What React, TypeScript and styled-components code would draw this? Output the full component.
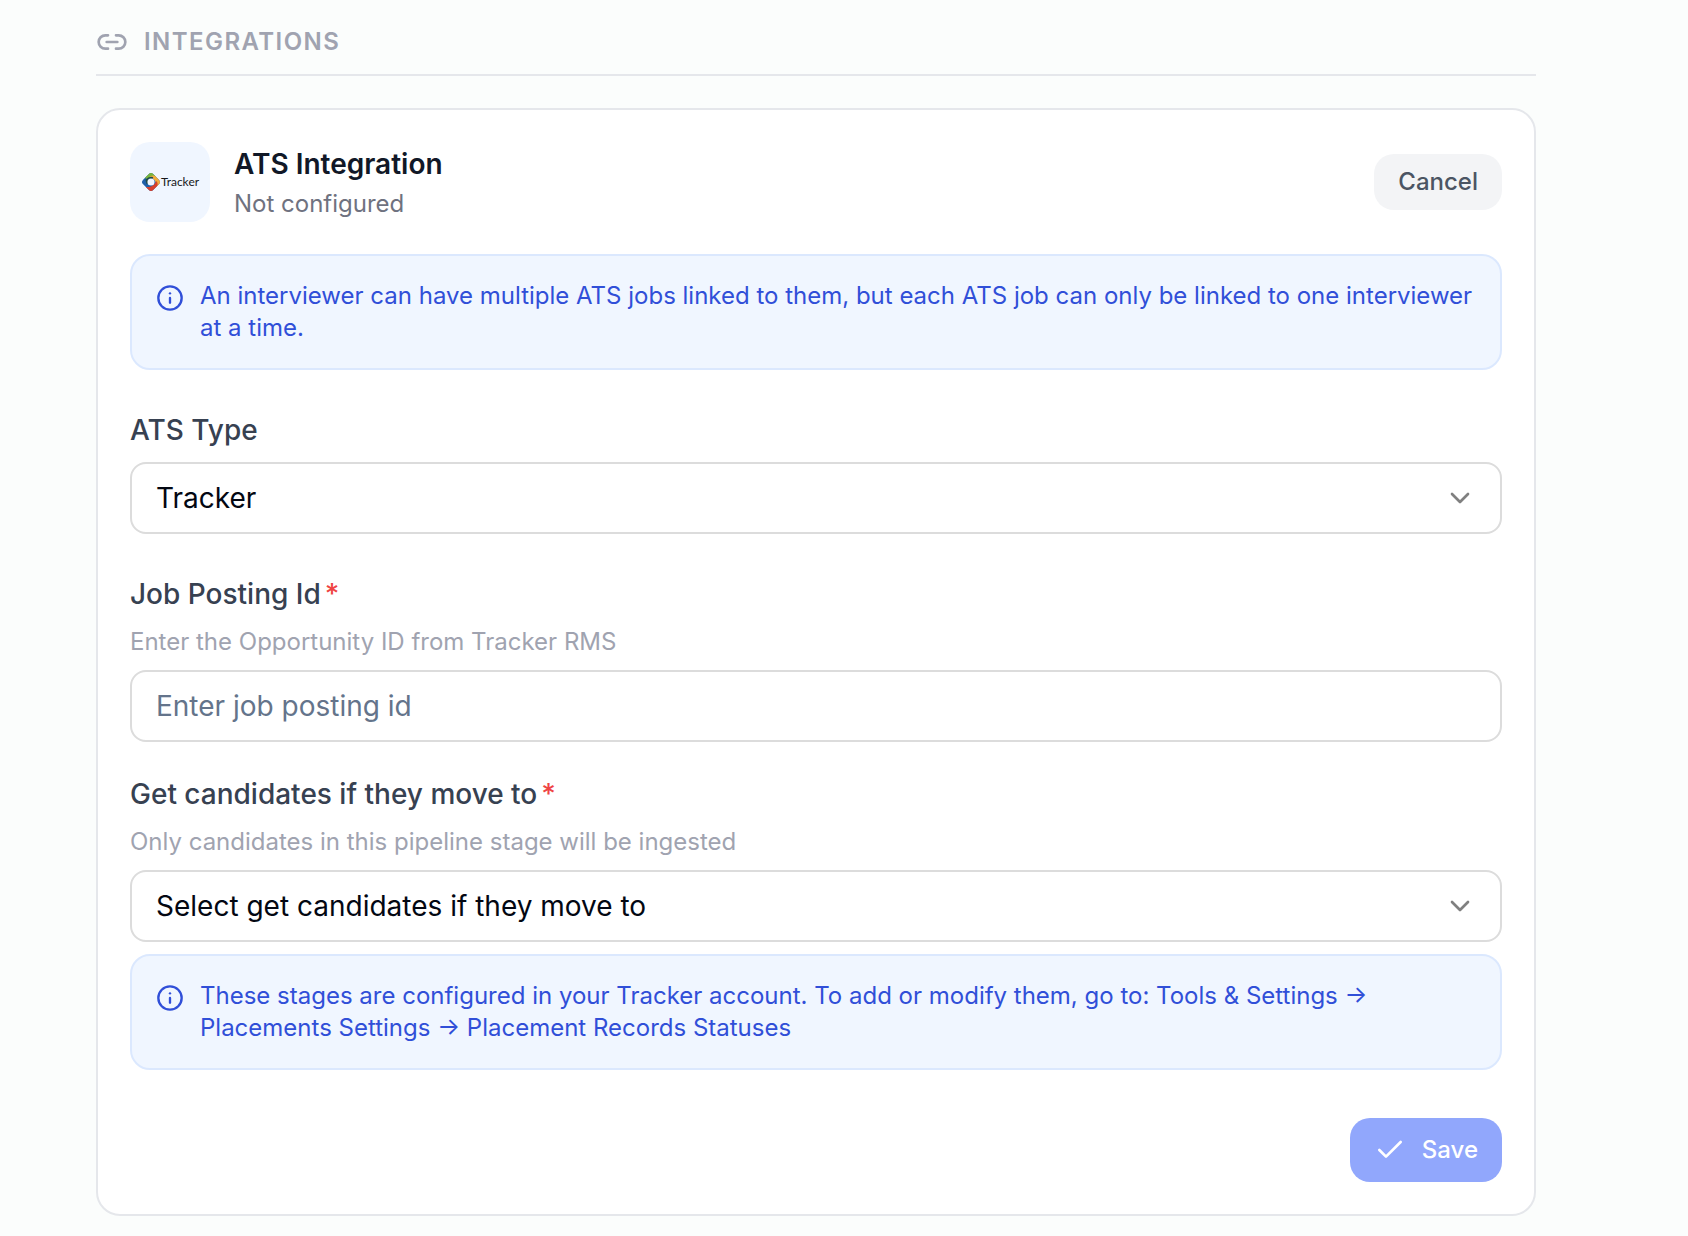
import React, { useState } from "react";
import styled, { createGlobalStyle } from "styled-components";
import { Check, ChevronDown, Info, Link2 } from "lucide-react";

const GlobalStyle = createGlobalStyle`
  *, *::before, *::after { box-sizing: border-box; }
  body {
    margin: 0;
    background: #fbfdfc;
    color: #030712;
    font-family: Inter, "Liberation Sans", sans-serif;
    -webkit-font-smoothing: antialiased;
  }
  button, input, select { font: inherit; letter-spacing: inherit; }
  h1, h2, p { margin: 0; }
`;

const Page = styled.main`
  padding: 26px 152px 20px 96px;
`;

const SectionHeader = styled.header`
  display: flex;
  align-items: center;
  gap: 16px;
  padding-bottom: 16px;
  margin-bottom: 32px;
  border-bottom: 2px solid #e5e7eb;
  color: #a0a3b0;
`;

const SectionTitle = styled.h1`
  font-size: 24px;
  line-height: 32px;
  font-weight: 600;
  letter-spacing: 0.06em;
  text-transform: uppercase;
`;

const Card = styled.section`
  padding: 32px;
  background: #fff;
  border: 2px solid #e5e7eb;
  border-radius: 24px;
`;

const CardHeader = styled.div`
  display: flex;
  align-items: center;
  gap: 24px;
  margin-bottom: 32px;
`;

const LogoTile = styled.div`
  display: flex;
  align-items: center;
  justify-content: center;
  width: 80px;
  height: 80px;
  border-radius: 20px;
  background: #f0f6ff;
`;

const LogoText = styled.span`
  font-family: Lato, sans-serif;
  font-size: 12px;
  line-height: 16px;
  color: #18181b;
`;

const Heading = styled.div`
  display: flex;
  flex: 1;
  flex-direction: column;
  gap: 4px;
`;

const CardTitle = styled.h2`
  font-size: 28px;
  line-height: 40px;
  font-weight: 600;
  color: #111827;
`;

const Status = styled.p`
  font-size: 24px;
  line-height: 32px;
  color: #6f7280;
`;

const Button = styled.button<{ $primary?: boolean }>`
  display: inline-flex;
  align-items: center;
  gap: 16px;
  padding: ${(p) => (p.$primary ? "16px 24px" : "12px 24px")};
  border: 0;
  border-radius: 20px;
  background: ${(p) => (p.$primary ? "#91a7fc" : "#f3f4f6")};
  color: ${(p) => (p.$primary ? "#fff" : "#4b5563")};
  font-size: 24px;
  line-height: 32px;
  font-weight: 500;
  cursor: pointer;
`;

const Notice = styled.div`
  display: flex;
  gap: 16px;
  padding: 24px;
  border: 2px solid #dbe8fe;
  border-radius: 20px;
  background: #f0f6ff;
  color: #304fd8;
  font-size: 24px;
  line-height: 32px;

  svg { flex: none; margin-top: 4px; }
`;

const Form = styled.form`
  display: flex;
  flex-direction: column;
  gap: 40px;
`;

const FieldGroup = styled.div`
  display: flex;
  flex-direction: column;
  gap: 32px;
`;

const Field = styled.div`
  display: flex;
  flex-direction: column;
  gap: 12px;
`;

const Label = styled.label`
  font-size: 28px;
  line-height: 40px;
  font-weight: 500;
  color: #374151;
`;

const Required = styled.span`
  margin-left: 4px;
  color: #ef4444;
`;

const Hint = styled.p`
  font-size: 24px;
  line-height: 32px;
  color: #a0a3b0;
`;

const Input = styled.input`
  width: 100%;
  height: 72px;
  padding: 0 24px;
  border: 2px solid #dcdcdc;
  border-radius: 16px;
  background: #fff;
  color: #030712;
  font-size: 28px;
  line-height: 40px;

  &::placeholder { color: #64748b; opacity: 1; }
`;

const SelectWrap = styled.div`
  position: relative;
  display: flex;
  align-items: center;

  svg {
    position: absolute;
    right: 26px;
    color: #808080;
    pointer-events: none;
  }
`;

const Select = styled(Input).attrs({ as: "select" })`
  appearance: none;
`;

const Actions = styled.div`
  display: flex;
  justify-content: flex-end;
  padding-top: 8px;
`;

function TrackerMark() {
  return (
    <svg width="20" height="20" viewBox="0 0 18 18" aria-hidden="true">
      <clipPath id="mark">
        <rect x="2.500" y="2.500" width="13" height="13" rx="3" transform="rotate(45 9 9)" />
      </clipPath>
      <g clipPath="url(#mark)">
        <rect width="18" height="18" fill="#1f5fa8" />
        <path d="M2 6 L9 -1 L14.500 4.500 Q9 4 6 7 Q4 4.500 2 6 Z" fill="#7ab53c" />
        <path d="M8 4 Q12 2 14.500 4.500 L19 9 L14 14 Q14 9 11.500 6.500 Z" fill="#f2ac3c" />
        <path d="M14 8 Q16 11 14 14 L9 19 L3.500 13.500 Q9 14 12 11 Z" fill="#d8402c" />
        <path d="M4 7 Q7 3.500 11 4.600 L9 9 L5 11 Z" fill="#1d4a4a" />
      </g>
      <circle cx="9" cy="9" r="3.200" fill="#f0f6ff" />
    </svg>
  );
}

type SelectFieldProps = { id: string; value: string; options: string[]; onChange: (v: string) => void };

function SelectField({ id, value, options, onChange }: SelectFieldProps) {
  return (
    <SelectWrap>
      <Select id={id} value={value} onChange={(e: any) => onChange(e.target.value)}>
        {options.map((o) => (
          <option key={o}>{o}</option>
        ))}
      </Select>
      <ChevronDown size={32} aria-hidden="true" />
    </SelectWrap>
  );
}

export default function App() {
  const [ats, setAts] = useState("Tracker");
  const [stage, setStage] = useState("Select get candidates if they move to");
  const [jobId, setJobId] = useState("");

  return (
    <>
      <GlobalStyle />
      <Page>
        <SectionHeader>
          <Link2 size={32} aria-hidden="true" />
          <SectionTitle>Integrations</SectionTitle>
        </SectionHeader>
        <Card>
          <CardHeader>
            <LogoTile>
              <TrackerMark />
              <LogoText>Tracker</LogoText>
            </LogoTile>
            <Heading>
              <CardTitle>ATS Integration</CardTitle>
              <Status>Not configured</Status>
            </Heading>
            <Button type="button">Cancel</Button>
          </CardHeader>
          <Form onSubmit={(e) => e.preventDefault()}>
            <Notice>
              <Info size={28} strokeWidth={2} aria-hidden="true" />
              <p>
                An interviewer can have multiple ATS jobs linked to them, but each ATS job can only be linked to one
                interviewer at a time.
              </p>
            </Notice>
            <Field>
              <Label htmlFor="ats-type">ATS Type</Label>
              <SelectField id="ats-type" value={ats} options={["Tracker"]} onChange={setAts} />
            </Field>
            <FieldGroup>
              <Field>
                <Label htmlFor="job-id">
                  Job Posting Id<Required>*</Required>
                </Label>
                <Hint>Enter the Opportunity ID from Tracker RMS</Hint>
                <Input
                  id="job-id"
                  placeholder="Enter job posting id"
                  value={jobId}
                  onChange={(e) => setJobId(e.target.value)}
                />
              </Field>
              <Field>
                <Label htmlFor="stage">
                  Get candidates if they move to<Required>*</Required>
                </Label>
                <Hint>Only candidates in this pipeline stage will be ingested</Hint>
                <SelectField
                  id="stage"
                  value={stage}
                  options={["Select get candidates if they move to"]}
                  onChange={setStage}
                />
                <Notice>
                  <Info size={28} strokeWidth={2} aria-hidden="true" />
                  <p>
                    These stages are configured in your Tracker account. To add or modify them, go to: Tools &amp;
                    Settings → Placements Settings → Placement Records Statuses
                  </p>
                </Notice>
              </Field>
            </FieldGroup>
            <Actions>
              <Button type="submit" $primary>
                <Check size={32} aria-hidden="true" />
                Save
              </Button>
            </Actions>
          </Form>
        </Card>
      </Page>
    </>
  );
}
